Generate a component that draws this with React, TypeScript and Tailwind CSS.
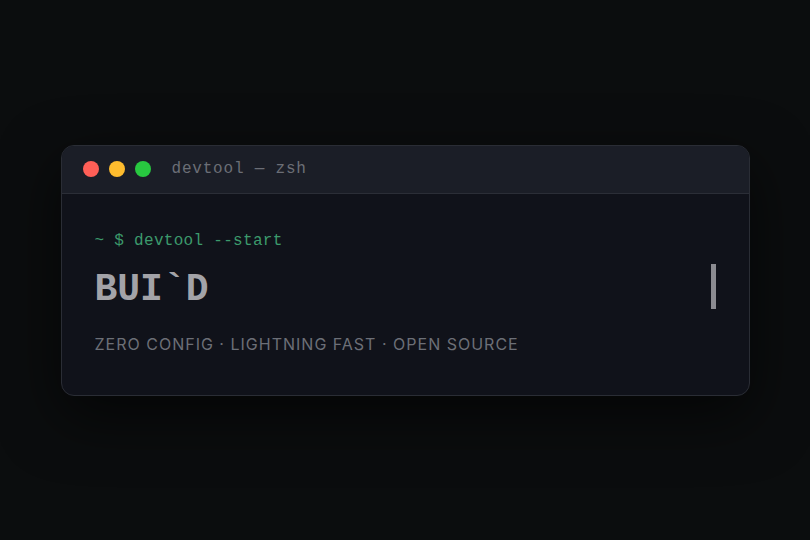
import React from 'react';

const mono = { fontFamily: '"Courier New", Courier, "Nimbus Mono PS", "Nimbus Mono L", FreeMono, "Liberation Mono", monospace' };

const TrafficLights: React.FC = () => (
    <div className="flex items-center gap-[10px]">
        <span className="w-4 h-4 rounded-full bg-[#ff5f57]" />
        <span className="w-4 h-4 rounded-full bg-[#febc2e]" />
        <span className="w-4 h-4 rounded-full bg-[#28c840]" />
    </div>
);

const App: React.FC = () => {
    return (
        <div className="w-[810px] h-[540px] bg-[#0b0d0e] flex items-center justify-center">
            <div className="w-[689px] h-[251px] rounded-[13px] border border-[#2a2d35] bg-[#10121a] overflow-hidden shadow-[0_20px_60px_rgba(0,0,0,0.6)] flex flex-col">
                <div className="h-[48px] shrink-0 flex items-center pl-[21px] gap-[21px] bg-[#1b1e27] border-b border-[#2b2e37]">
                    <TrafficLights />
                    <span className="text-[16px] tracking-[0.8px] text-[#6b6e76]" style={mono}>devtool — zsh</span>
                </div>
                <div className="flex-1 flex pl-[33px] pr-[33px] pt-[36px]">
                    <div className="flex-1 flex flex-col">
                        <p className="text-[16px] tracking-[0.3px] leading-[22px] text-[#3c9a6c]" style={mono}>~ $ devtool --start</p>
                        <h1 className="mt-[16px] text-[38px] leading-[44px] font-bold text-[#a3a3a8]" style={mono}>BUI`D</h1>
                        <p className="mt-[20px] text-[16px] tracking-[1px] text-[#6c6f77]" style={{ fontFamily: 'Inter, "Noto Sans", sans-serif' }}>ZERO CONFIG · LIGHTNING FAST · OPEN SOURCE</p>
                    </div>
                    <div className="pt-[34px]">
                        <div className="w-[5px] h-[45px] bg-[#8b8b91]" />
                    </div>
                </div>
            </div>
        </div>
    );
};

export default App;
